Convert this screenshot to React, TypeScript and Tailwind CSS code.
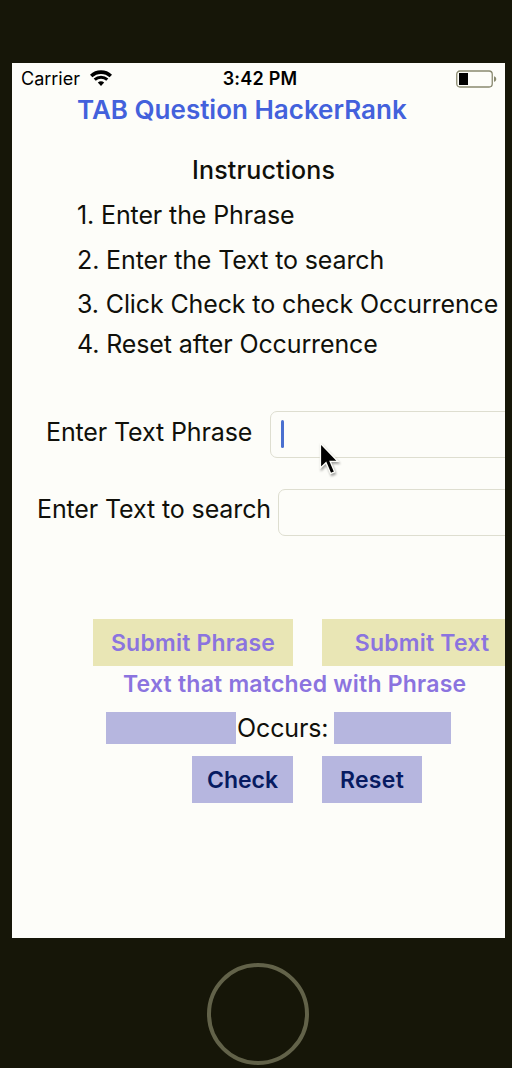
import type { ReactNode } from 'react';

function WifiIcon() {
  return (
    <svg className="ml-2.5 mb-px" width="22" height="16" viewBox="0 0 22 16" fill="none">
      <path d="M1.2 6A14.3 14.3 0 0 1 20.8 6" stroke="#000" strokeWidth="3.6" />
      <path d="M4.7 9.7A9.2 9.2 0 0 1 17.3 9.7" stroke="#000" strokeWidth="3" />
      <path d="M7.8 12.6A4.8 4.8 0 0 1 14.2 12.6L11 15.9Z" fill="#000" />
    </svg>
  );
}

function BatteryIcon() {
  return (
    <svg width="41" height="18" viewBox="0 0 41 18" fill="none">
      <rect x="0.75" y="1" width="35.5" height="16" rx="3.2" stroke="#89896f" strokeWidth="1.3" />
      <rect x="3" y="3" width="9" height="12" fill="#000" />
      <path d="M38 6.2C41 7 41 11 38 11.8Z" fill="#89896f" />
    </svg>
  );
}

function Pointer() {
  return (
    <svg
      className="absolute left-[304px] top-[377px] drop-shadow-[1px_2px_1px_rgba(0,0,0,0.35)]"
      width="26"
      height="40"
      viewBox="0 0 26 40"
    >
      <path
        d="M4.4 3.2V28L10 22.8L14.6 33.6L18.6 31.8L14.2 21.4H22Z"
        fill="#000"
        stroke="#fdfdf8"
        strokeWidth="1.4"
      />
    </svg>
  );
}

function Line({ className, children }: { className: string; children: ReactNode }) {
  return <div className={`h-8 leading-8 ${className}`}>{children}</div>;
}

export default function App() {
  return (
    <div className="flex h-[1068px] w-[512px] flex-col bg-[#161608] pl-3 pt-[63px] font-['Inter',sans-serif] text-[25px] text-[#10100a]">
      <main className="relative h-[875px] w-[493px] shrink-0 overflow-hidden whitespace-nowrap bg-[#fdfdf9]">
        <header className="grid h-[31px] grid-cols-[1fr_auto_1fr] items-center pl-[9px] pr-2 text-lg text-black">
          <div className="flex items-center">
            <span>Carrier</span>
            <WifiIcon />
          </div>
          <span className="pl-0.5 font-semibold tracking-[0.2px]">3:42 PM</span>
          <div className="flex justify-end">
            <BatteryIcon />
          </div>
        </header>

        <h1 className="h-8 pl-[65px] text-[26px] font-semibold leading-8 text-[#4361dc]">TAB Question HackerRank</h1>

        <section className="pl-[65px] pt-7 tracking-[-0.12px]">
          <h2 className="h-8 pl-[115px] font-medium leading-8 tracking-[0.15px]">Instructions</h2>
          <Line className="mt-[13px]">1. Enter the Phrase</Line>
          <Line className="mt-[13px]">2. Enter the Text to search</Line>
          <Line className="mt-[12px]">3. Click Check to check Occurrence</Line>
          <Line className="mt-[8px]">4. Reset after Occurrence</Line>
        </section>

        <section className="mt-[51px] flex flex-col gap-[31px] tracking-[-0.12px]">
          <label className="flex h-[47px] items-center">
            <span className="w-[258px] shrink-0 pl-[34px] pb-[3px]">Enter Text Phrase</span>
            <span className="flex h-[47px] w-[300px] shrink-0 items-center rounded-[7px] border border-[#deded0] pl-2.5">
              <span className="mb-0.5 h-7 w-[3px] rounded-full bg-[#4a70d0]" />
            </span>
          </label>
          <label className="flex h-[47px] items-center">
            <span className="w-[266px] shrink-0 pl-[25px] pb-[5px]">Enter Text to search</span>
            <span className="h-[47px] w-[300px] shrink-0 rounded-[7px] border border-[#deded0]" />
          </label>
        </section>

        <section className="mt-[83px]">
          <div className="flex gap-[29px] pl-[81px] text-[23px] font-semibold tracking-[0.22px] text-[#8b74df]">
            <button className="h-[47px] w-[200px] shrink-0 bg-[#e9e6b5] pt-0.5">Submit Phrase</button>
            <button className="h-[47px] w-[200px] shrink-0 bg-[#e9e6b5] pt-0.5">Submit Text</button>
          </div>
          <Line className="mt-0.5 pl-[111px] text-[23px] font-semibold tracking-[0.22px] text-[#8b74df]">
            Text that matched with Phrase
          </Line>
          <div className="mt-3 flex h-8 items-center pl-[94px]">
            <span className="h-8 w-[130px] shrink-0 bg-[#b6b6df]" />
            <span className="w-[98px] shrink-0 pl-px pt-0.5 tracking-[-0.12px]">Occurs:</span>
            <span className="h-8 w-[117px] shrink-0 bg-[#b6b6df]" />
          </div>
          <div className="mt-3 flex gap-[29px] pl-[180px] text-[23px] font-semibold text-[#071b61]">
            <button className="h-[47px] w-[101px] shrink-0 bg-[#b6b6df] pt-0.5">Check</button>
            <button className="h-[47px] w-[100px] shrink-0 bg-[#b6b6df] pt-0.5 tracking-[0.3px]">Reset</button>
          </div>
        </section>

        <Pointer />
      </main>
      <div className="ml-[195px] mt-[25px] size-[102px] shrink-0 rounded-full border-4 border-[#626249]" />
    </div>
  );
}
